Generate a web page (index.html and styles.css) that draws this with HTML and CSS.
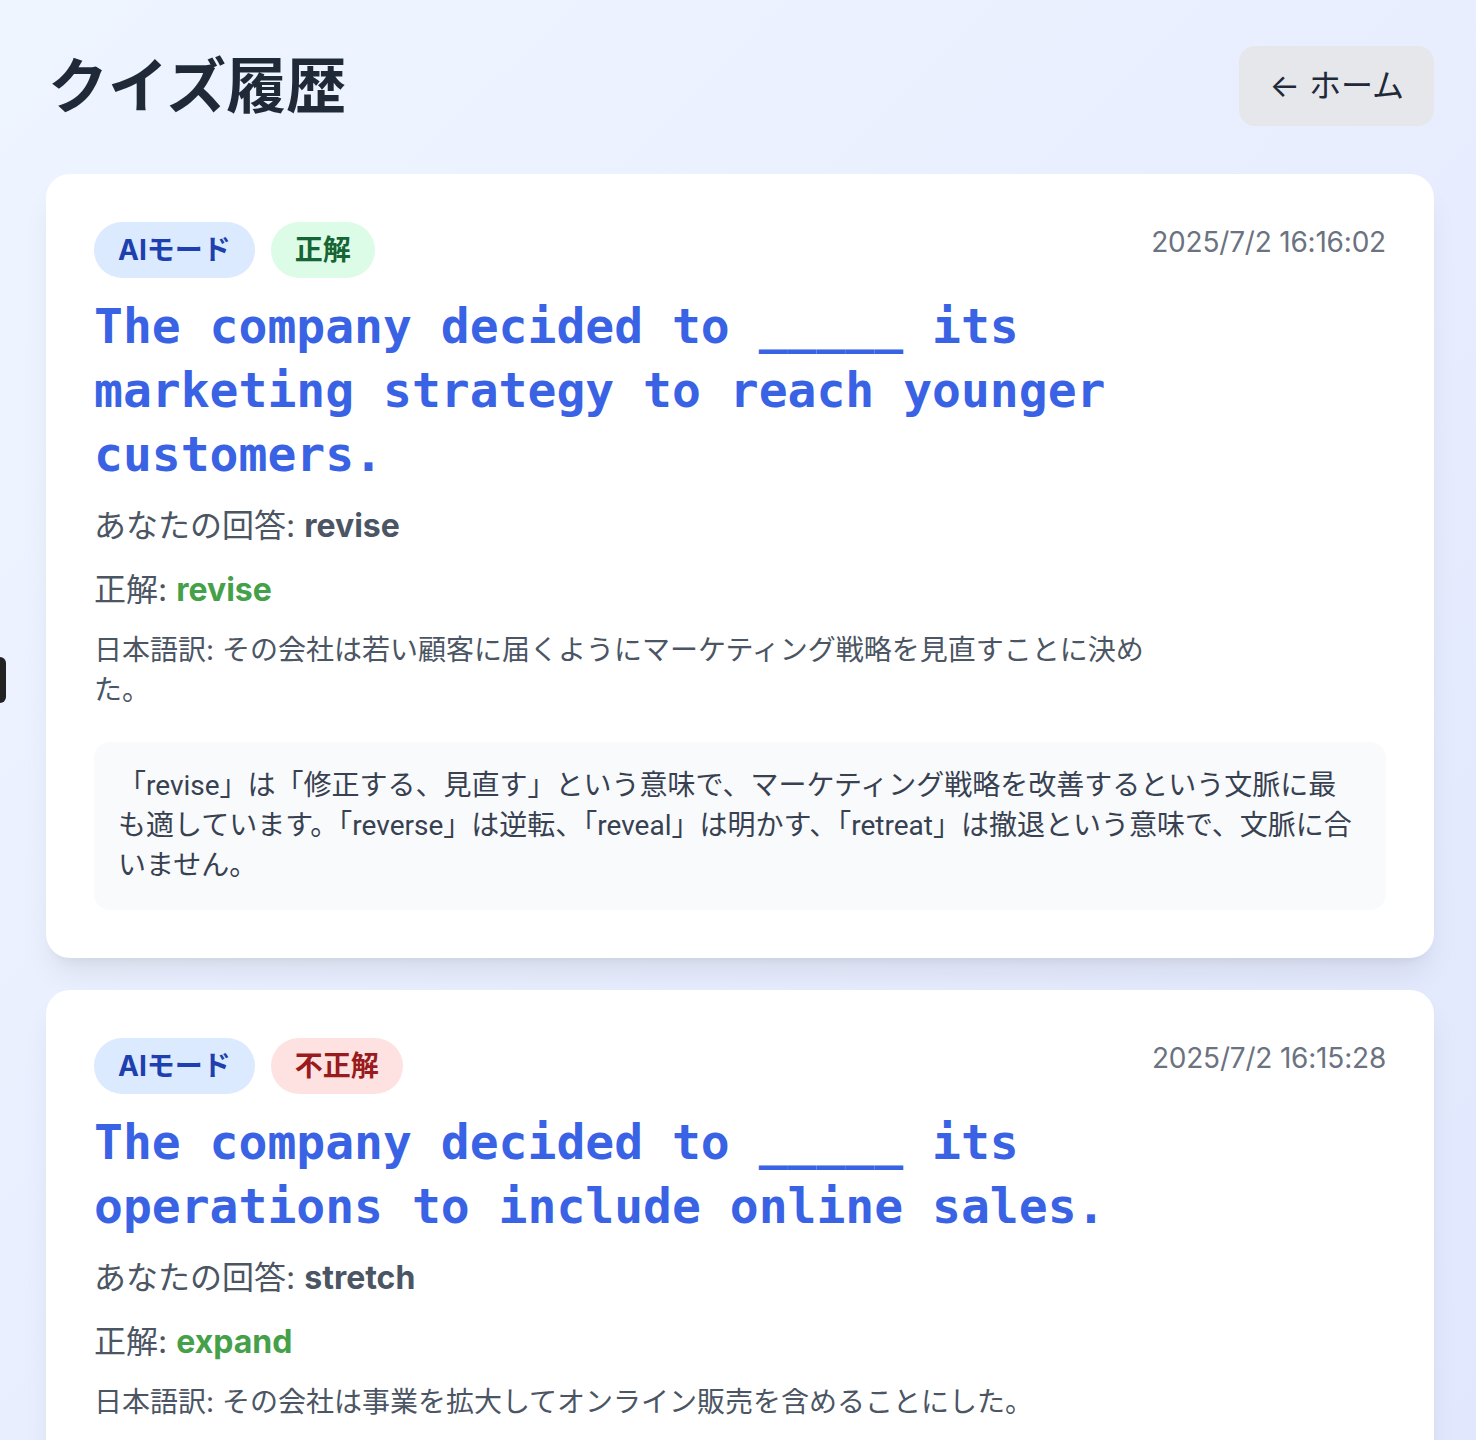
FILE: index.html
```html
<!DOCTYPE html>
<html lang="ja">
<head>
  <meta charset="UTF-8">
  <meta name="viewport" content="width=device-width, initial-scale=1">
  <title>クイズ履歴</title>
  <link rel="stylesheet" href="styles.css">
</head>
<body>
  <div class="side-tab"></div>
  <div class="page">
    <header class="header">
      <h1>クイズ履歴</h1>
      <button class="home-btn">← ホーム</button>
    </header>

    <div class="history">
      <div class="card">
        <div class="card-top">
          <div class="card-main">
            <div class="badges">
              <span class="badge badge-mode">AIモード</span>
              <span class="badge badge-ok">正解</span>
            </div>
            <p class="question">The company decided to _____ its marketing strategy to reach younger customers.</p>
            <p class="answer">あなたの回答: <strong>revise</strong></p>
            <p class="answer">正解: <strong class="correct">revise</strong></p>
            <p class="translation">日本語訳: その会社は若い顧客に届くようにマーケティング戦略を見直すことに決めた。</p>
          </div>
          <span class="time">2025/7/2 16:16:02</span>
        </div>
        <div class="explain">「revise」は「修正する、見直す」という意味で、マーケティング戦略を改善するという文脈に最も適しています。「reverse」は逆転、「reveal」は明かす、「retreat」は撤退という意味で、文脈に合いません。</div>
      </div>

      <div class="card">
        <div class="card-top">
          <div class="card-main">
            <div class="badges">
              <span class="badge badge-mode">AIモード</span>
              <span class="badge badge-ng">不正解</span>
            </div>
            <p class="question">The company decided to _____ its operations to include online sales.</p>
            <p class="answer">あなたの回答: <strong>stretch</strong></p>
            <p class="answer">正解: <strong class="correct">expand</strong></p>
            <p class="translation">日本語訳: その会社は事業を拡大してオンライン販売を含めることにした。</p>
          </div>
          <span class="time">2025/7/2 16:15:28</span>
        </div>
        <div class="explain">「expand」は「拡大する」という意味で、事業の範囲を広げるという文脈に最も適しています。</div>
      </div>
    </div>
  </div>
</body>
</html>
```

FILE: styles.css
```css
html, body {
  margin: 0;
}
body {
  font-family: Inter, "Noto Sans CJK JP", sans-serif;
  background: linear-gradient(135deg, #eff5ff, #e1e7fd) fixed;
  min-height: 100vh;
  color: #1f2937;
}
.page {
  padding: 46px 42px 48px 46px;
}
.side-tab {
  position: absolute;
  left: -12px;
  top: 657px;
  width: 18px;
  height: 46px;
  background: #222;
  border-radius: 6px;
}
.header {
  display: flex;
  justify-content: space-between;
  align-items: center;
  margin-bottom: 48px;
}
.header h1 {
  margin: 0 0 0 2px;
  font-size: 60px;
  line-height: 72px;
  font-weight: 700;
  color: #1f2937;
}
.home-btn {
  font-family: inherit;
  font-size: 32px;
  line-height: 48px;
  padding: 16px 30px;
  background: #e5e7eb;
  color: #1f2937;
  border: none;
  border-radius: 16px;
  cursor: pointer;
}
.history {
  display: flex;
  flex-direction: column;
  gap: 32px;
}
.card {
  background: white;
  border-radius: 24px;
  padding: 48px;
  box-shadow: 0 20px 30px -6px rgba(0,0,0,0.08), 0 8px 12px -8px rgba(0,0,0,0.08);
}
.card-top {
  display: flex;
  justify-content: space-between;
  align-items: flex-start;
}
.card-main {
  flex: 1;
}
.badges {
  display: flex;
  gap: 16px;
}
.badge {
  font-size: 28px;
  line-height: 40px;
  padding: 8px 24px;
  border-radius: 999px;
  font-weight: 700;
}
.badge-mode {
  background: #dbeafe;
  color: #1e40af;
}
.badge-ok {
  background: #dcfce7;
  color: #166534;
}
.badge-ng {
  background: #fee2e2;
  color: #991b1b;
}
.time {
  font-size: 28px;
  line-height: 40px;
  color: #6b7280;
  white-space: nowrap;
  letter-spacing: -0.2px;
}
.question {
  margin: 16px 0 0;
  font-family: "DejaVu Sans Mono", monospace;
  font-weight: 700;
  font-size: 48px;
  line-height: 64px;
  color: #3963e4;
}
.answer {
  margin: 16px 0 0;
  font-size: 32px;
  line-height: 48px;
  color: #4b5563;
}
.answer strong {
  font-weight: 700;
}
.answer .correct {
  color: #45a04a;
}
.translation {
  margin: 16px 0 0;
  font-size: 28px;
  line-height: 40px;
  color: #4b5563;
}
.explain {
  margin-top: 32px;
  background: #f9fafb;
  border-radius: 16px;
  padding: 24px;
  font-family: Roboto, "Noto Sans CJK JP", sans-serif;
  font-size: 28px;
  line-height: 40px;
  color: #374151;
}
```
